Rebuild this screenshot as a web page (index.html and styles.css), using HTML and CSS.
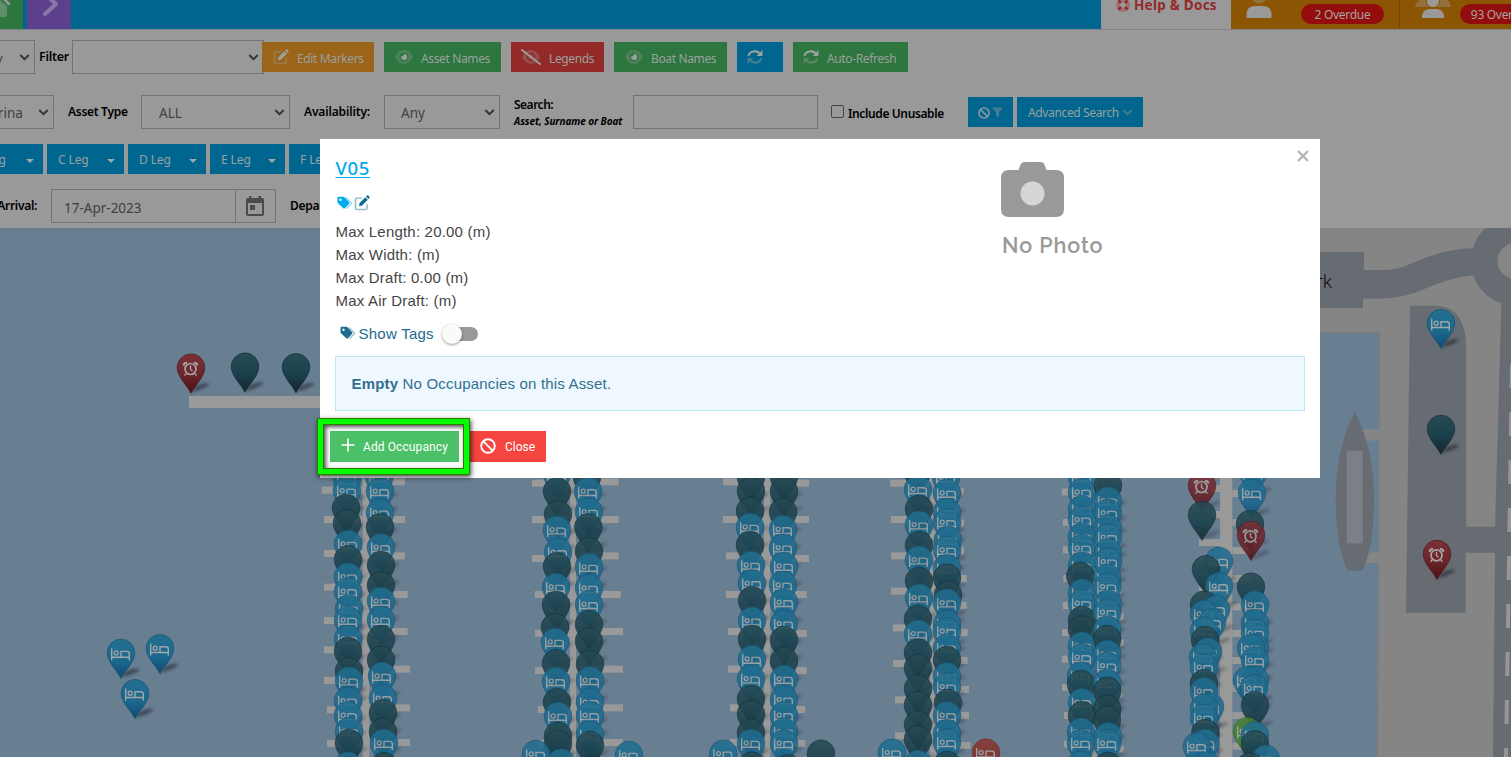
FILE: index.html
```html
<!DOCTYPE html>
<html lang="en">
<head>
<meta charset="utf-8">
<title>Marina Map</title>
<link rel="stylesheet" href="styles.css">
</head>
<body>
<svg class="defs" width="0" height="0">
  <defs>
    <symbol id="i-edit" viewBox="0 0 16 16"><path class="soft" fill="none" stroke="currentColor" stroke-width="1.7" d="M8 3H3Q1.500 3 1.500 4.500V13Q1.500 14.500 3 14.500H11.500Q13 14.500 13 13V9"/><path fill="currentColor" d="M5 11.200L5.600 8 11.300 2.300 13.800 4.800 8.100 10.500ZM12 1.600L13 .6Q13.700 0 14.500 .8L15.300 1.600Q16 2.400 15.400 3.100L14.400 4.100Z"/></symbol>
    <symbol id="i-eye" viewBox="0 0 18 14"><path class="faint" fill="currentColor" fill-rule="evenodd" d="M0 7Q3.500 0 9 0T18 7Q14.500 14 9 14T0 7ZM9 2.500A4.500 4.500 0 1 0 9 11.500 4.500 4.500 0 1 0 9 2.500Z"/><path fill="currentColor" d="M9 4A3 3 0 1 1 6.200 6.300Q8.600 7 9 4Z"/></symbol>
    <symbol id="i-eyeoff" viewBox="0 0 20 16"><path class="faint" fill="currentColor" fill-rule="evenodd" d="M1 8Q4.500 1 10 1T19 8Q15.500 15 10 15T1 8ZM10 3.800A4.200 4.200 0 1 0 10 12.200 4.200 4.200 0 1 0 10 3.800Z"/><circle class="faint" cx="10" cy="8" r="2.500" fill="currentColor"/><path stroke="currentColor" stroke-width="1.800" stroke-linecap="round" d="M1 1L19 15"/></symbol>
    <symbol id="i-sync" viewBox="0 0 16 16"><path fill="none" stroke="currentColor" stroke-width="2" d="M1.500 7A6.500 5.500 0 0 1 13 4.500"/><path fill="currentColor" d="M15.500 1V7H9.500Z"/><g class="soft"><path fill="none" stroke="currentColor" stroke-width="2" d="M14.500 9A6.500 5.500 0 0 1 3 11.500"/><path fill="currentColor" d="M.5 15V9H6.500Z"/></g></symbol>
    <symbol id="i-ban" viewBox="0 0 16 16"><g fill="none" stroke="currentColor" stroke-width="1.900"><circle cx="8" cy="8" r="6.800"/><path d="M3.200 3.200L12.800 12.800"/></g></symbol>
    <symbol id="i-tags" viewBox="0 0 16 14"><path class="soft" fill="none" stroke="currentColor" stroke-width="1.300" d="M9 1.500L14.800 7.200 9.500 12.700"/><path fill="currentColor" fill-rule="evenodd" d="M.5 2Q.5 .8 1.700 .8H6.500Q7 .8 7.500 1.300L12 6Q13 7 12 8L8 12.200Q7 13 6 12L1 7.200Q.5 6.800 .5 6ZM3.500 2.500A1.200 1.200 0 1 0 3.500 4.900 1.200 1.200 0 1 0 3.500 2.500Z"/></symbol>
    <symbol id="i-chev" viewBox="0 0 12 8"><path fill="none" stroke="currentColor" stroke-width="2.200" d="M1.200 1.200L6 6 10.800 1.200"/></symbol>
    <linearGradient id="g-bed" x1="0" y1="0" x2="0" y2="1"><stop offset="0" stop-color="#236f90"/><stop offset=".55" stop-color="#1c698e"/><stop offset="1" stop-color="#114673"/></linearGradient>
    <linearGradient id="g-free" x1="0" y1="0" x2="0" y2="1"><stop offset="0" stop-color="#284b54"/><stop offset=".55" stop-color="#19404c"/><stop offset="1" stop-color="#16252a"/></linearGradient>
    <linearGradient id="g-late" x1="0" y1="0" x2="0" y2="1"><stop offset="0" stop-color="#7d3038"/><stop offset=".55" stop-color="#6b242a"/><stop offset="1" stop-color="#4a1015"/></linearGradient>
    <linearGradient id="g-out" x1="0" y1="0" x2="0" y2="1"><stop offset="0" stop-color="#8b3934"/><stop offset="1" stop-color="#75251f"/></linearGradient>
    <linearGradient id="g-new" x1="0" y1="0" x2="0" y2="1"><stop offset="0" stop-color="#4b8035"/><stop offset="1" stop-color="#3e7826"/></linearGradient>
    <filter id="soften" x="-50%" y="-50%" width="200%" height="200%"><feGaussianBlur stdDeviation="1.700"/></filter>
    <path id="pin-shape" d="M0 39.500C-3 33-13.800 23-13.800 14A13.800 13.800 0 0 1 13.800 14C13.800 23 3 33 0 39.500Z"/>
    <path id="pin-shade" d="M0 38.500Q3 31 14 29.500 20 29 17 32 10 36.500 0 38.500Z"/>
    <g id="pin-bed" fill="none" stroke="#a3a6a8" transform="translate(-.5 .7)"><path stroke-width="1.400" d="M-8.800 8.500V20.500M-8.800 17.500H8.800M8.800 20.500V14Q8.800 11.700 6 11.700H.5V17"/><circle cx="-4.300" cy="13.200" r="2" stroke-width="1.300"/></g>
    <g id="pin-clock" fill="none" stroke="#a5a5a5" transform="translate(-.5 .3)"><circle cy="15" r="5.500" stroke-width="1.700"/><path stroke-width="1.300" d="M0 11.500V15.500L2 17M-4.200 19.500L-6 21.500M4.200 19.500L6 21.500"/><path stroke-width="2" d="M-7 11.500Q-6.500 8.500-3.500 8.700M7 11.500Q6.500 8.500 3.500 8.700"/></g>
  </defs>
</svg>

<div class="app">
  <header class="topbar">
    <div class="tile home"><svg width="23" height="29"><path fill="#5f9069" d="M-8 0H0L7 6V15Q7 17 5 17H-8Z"/><path stroke="#999" stroke-width="2.500" stroke-linecap="round" d="M3-2L9 4"/></svg></div>
    <div class="tile next"><svg width="44" height="29"><path fill="none" stroke="#8876a8" stroke-width="4" stroke-linecap="round" stroke-linejoin="round" d="M18-6L29 4 18 14"/></svg></div>
    <div class="tile help"><svg width="14" height="14" viewBox="0 0 14 14"><circle cx="7" cy="7" r="5" fill="none" stroke="#a17170" stroke-width="4"/><path stroke="#932a2a" stroke-width="2.600" d="M2.500 2.500L5 5M9 9L11.500 11.500M11.500 2.500L9 5M5 9L2.500 11.500"/></svg><b>Help &amp; Docs</b></div>
    <div class="tile count one"><svg width="26" height="29"><circle cx="13" cy="-4" r="7.500" fill="#94713c"/><path fill="#999" d="M.5 18V15Q.5 6 9 6H17Q25.500 6 25.500 15V18Z"/></svg><span class="badge">2 Overdue</span></div>
    <div class="tile count two"><svg width="38" height="29"><path fill="#94713c" d="M0 7Q1 0 8-1H30Q35 0 36 7Z"/><circle cx="18" cy="1" r="6.500" fill="#999" stroke="#8b5503"/><path fill="#999" d="M7 18V16Q8 9 15 9H21Q28 9 29 16V18Z"/></svg><span class="badge">93 Overdue</span></div>
  </header>

  <section class="row r1">
    <div class="select s-view">y<svg><use href="#i-chev"/></svg></div>
    <label class="lb l-filter">Filter</label>
    <div class="select s-filter"><svg><use href="#i-chev"/></svg></div>
    <button class="btn orange b1"><svg width="16" height="16"><use href="#i-edit"/></svg>Edit Markers</button>
    <button class="btn green b2"><svg width="18" height="14"><use href="#i-eye"/></svg>Asset Names</button>
    <button class="btn red b3"><svg width="20" height="16"><use href="#i-eyeoff"/></svg>Legends</button>
    <button class="btn green b4"><svg width="18" height="14"><use href="#i-eye"/></svg>Boat Names</button>
    <button class="btn blue b5"><svg width="16" height="16"><use href="#i-sync"/></svg></button>
    <button class="btn green b6"><svg width="16" height="16"><use href="#i-sync"/></svg>Auto-Refresh</button>
  </section>

  <section class="row r2">
    <div class="select s-marina">Marina<svg><use href="#i-chev"/></svg></div>
    <label class="lb l-type">Asset Type</label>
    <div class="select s-type">ALL<svg><use href="#i-chev"/></svg></div>
    <label class="lb l-avail">Availability:</label>
    <div class="select s-avail">Any<svg><use href="#i-chev"/></svg></div>
    <label class="lb l-search">Search:<i>Asset, Surname or Boat</i></label>
    <div class="input"></div>
    <span class="check"></span>
    <label class="lb l-unus">Include Unusable</label>
    <button class="btn blue b7"><svg width="12" height="12"><use href="#i-ban"/></svg><svg width="11" height="11" viewBox="0 0 11 11"><path class="soft" fill="currentColor" d="M0 .5H11L7 5.500V10.500L4 8.500V5.500Z"/></svg></button>
    <button class="btn blue b8">Advanced Search<svg class="soft" width="11" height="7"><use href="#i-chev"/></svg></button>
  </section>

  <section class="row r3">
    <button class="btn blue g1">B Leg<i class="caret"></i></button>
    <button class="btn blue g2">C Leg<i class="caret"></i></button>
    <button class="btn blue g3">D Leg<i class="caret"></i></button>
    <button class="btn blue g4">E Leg<i class="caret"></i></button>
    <button class="btn blue g5">F Leg<i class="caret"></i></button>
  </section>

  <section class="row r4">
    <label class="lb l-arr">Arrival:</label>
    <div class="date">17-Apr-2023</div>
    <div class="cal"><svg width="18" height="20" viewBox="0 0 18 20"><path fill="#4b4b4b" fill-rule="evenodd" d="M2 2H3V0H5.500V2H12.500V0H15V2H16Q18 2 18 4V18Q18 20 16 20H2Q0 20 0 18V4Q0 2 2 2ZM2 7V18H16V7ZM4 9H9V14H4Z"/></svg></div>
    <label class="lb l-dep">Departure:</label>
  </section>

  <svg class="map" width="1511" height="529" viewBox="0 228 1511 529">
    <rect y="228" width="1511" height="529" fill="#687e91"/>
    <path fill="#858585" d="M1200 228H1511V757H1377L1379 332H1200Z"/>
    <path fill="none" stroke="#7a7d7f" stroke-width="1.500" d="M1200 332.500H1379.500L1377.500 757"/>
    <path fill="#858585" d="M1362 429.500H1381V440.500H1362ZM1365 552.500H1380V563H1365Z"/>
    <g fill="#676c73">
      <path d="M1300 252H1364V270H1380.700Q1396 271 1415 262 1444 249 1475 248V275Q1452 277 1427 288 1402 299 1380.700 298.500H1363V308H1300Z"/>
      <circle cx="1516" cy="261" r="45"/>
      <path d="M1501.500 300H1511V757H1493L1495 552.700H1465.700V613H1406L1410 305.700H1438Q1466 308 1466.300 348V526.700H1495Z"/>
      <path d="M1354.700 411.500Q1335.700 450 1335.700 497 1336 548 1347.700 570.700H1362.300Q1374 548 1374 497 1374 450 1354.700 411.500Z"/>
    </g>
    <circle cx="1515.500" cy="261" r="18" fill="#858585"/>
    <rect x="1346.700" y="450.700" width="16" height="92.600" fill="#7b8087"/>
    <path stroke="#969696" stroke-width="4" stroke-dasharray="24 24" d="M1512 364L1506 757"/>
    <text class="place" x="1332" y="288" text-anchor="end">Car Park</text>
    <rect x="189" y="396" width="140" height="12" fill="#999"/>
    <g id="docks" fill="#999"></g>
    <g id="pins"></g>
  </svg>
</div>

<div class="modal">
  <div class="modal-top">
    <div class="info">
      <a class="title">V05</a>
      <div class="icons"><svg class="sky" width="16" height="14"><use href="#i-tags"/></svg><svg class="deep" width="16" height="16"><use href="#i-edit"/></svg></div>
      <p>Max Length: 20.00 (m)</p>
      <p>Max Width: (m)</p>
      <p>Max Draft: 0.00 (m)</p>
      <p>Max Air Draft: (m)</p>
      <div class="tags"><svg width="16" height="14"><use href="#i-tags"/></svg><span>Show Tags</span><span class="switch"></span></div>
    </div>
    <div class="photo">
      <svg width="63" height="55" viewBox="0 0 63 55"><path fill="#999" d="M8 8H17.500L19 4Q20 0 24 0H39Q43 0 44 4L45.500 8H55Q63 8 63 16V47Q63 55 55 55H8Q0 55 0 47V16Q0 8 8 8Z"/><circle cx="31.500" cy="31.500" r="12" fill="#d6d6d6"/></svg>
      <div class="nophoto">No Photo</div>
    </div>
    <svg class="close-x" width="12" height="12"><path stroke="#b5b5b5" stroke-width="2.300" d="M1 1L11 11M11 1L1 11"/></svg>
  </div>
  <div class="alert"><b>Empty</b> No Occupancies on this Asset.</div>
  <div class="actions">
    <button class="mbtn add"><svg width="14" height="14"><path stroke="#fff" stroke-width="1.700" d="M7 .5V13.500M.5 7H13.500"/></svg>Add Occupancy</button>
    <button class="mbtn close"><svg width="16" height="16"><use href="#i-ban"/></svg>Close</button>
  </div>
  <div class="marker-box"></div>
</div>
<script src="map.js"></script>
</body>
</html>
```

FILE: styles.css
```css
* { box-sizing: border-box; }
body { margin: 0; width: 1511px; height: 757px; overflow: hidden; background: #999; font-family: "Noto Sans", "Open Sans", sans-serif; font-size: 13px; color: #000; }
.defs { position: absolute; }
.soft { opacity: .42; }
.faint { opacity: .3; }
.app { display: flex; flex-direction: column; width: 1511px; height: 757px; overflow: hidden; }

.topbar { display: flex; flex: none; height: 30px; background: #006690; border-bottom: 1px solid #828486; overflow: hidden; }
.tile { flex: none; height: 29px; display: flex; overflow: hidden; }
.tile svg { flex: none; }
.home { width: 23px; background: #2d763f; margin-right: 4px; }
.next { width: 44px; background: #5c3f8d; }
.help { width: 130px; margin-left: 1030px; padding-left: 15px; background: #999; color: #932a2a; font-size: 13.500px; line-height: 18px; letter-spacing: .25px; }
.help svg { margin: -2px 4px 0 0; }
.help b { margin-top: -4px; white-space: nowrap; }
.count { background: #8b5503; }
.one { width: 169px; padding-left: 15px; border-right: 1px solid #754600; }
.two { width: 180px; padding-left: 15px; }
.badge { flex: none; height: 20px; margin-top: 4px; border-radius: 10px; background: #930d0c; color: #a8a3a0; font-size: 12px; line-height: 22px; text-align: center; letter-spacing: -.3px; white-space: nowrap; }
.one .badge { width: 83px; margin-left: 29px; }
.two .badge { width: 84px; margin-left: 7px; }

.row { display: flex; flex: none; align-items: center; white-space: nowrap; }
.row > * { flex: none; }
.r1 { height: 34px; margin: 10px 0 0 -60px; }
.r2 { height: 34px; margin: 21px 0 0 -60px; }
.r3 { height: 30px; margin: 15px 0 0 -60px; gap: 4px; }
.r4 { height: 34px; margin: 15px 0 5px -60px; }
.select { display: flex; align-items: center; justify-content: space-between; height: 34px; border: 1px solid #737373; color: #404040; font-size: 13.500px; padding: 1px 4px 0 0; }
.select svg { width: 11px; height: 7px; color: #333; margin-left: auto; }
.lb { font-weight: 600; font-size: 12px; letter-spacing: -.3px; padding-bottom: 2px; }
.s-view { width: 95px; padding-left: 55px; font-size: 13px; }
.l-filter { width: 37px; padding-left: 4px; font-size: 12.500px; }
.s-filter { width: 192px; }
.btn { display: flex; align-items: center; height: 30px; border: 0; margin: 0; padding: 1px 0 0; color: #9ba09e; font-family: inherit; font-size: 12px; letter-spacing: -.36px; text-align: left; }
.btn svg { flex: none; }
.r1 .btn { padding-top: 2px; }
.r1 .btn svg { margin-top: -3px; }
.orange { background: #9a6419; }
.green { background: #2d763f; }
.red { background: #932a28; }
.blue { background: #006690; }
.b1 { width: 112px; margin-left: -2px; padding-left: 11px; gap: 8px; position: relative; }
.b2 { width: 117px; margin-left: 10px; padding-left: 11px; gap: 8px; }
.b3 { width: 93px; margin-left: 10px; padding-left: 10px; gap: 8px; }
.b4 { width: 113px; margin-left: 10px; padding-left: 11px; gap: 8px; }
.b5 { width: 46px; margin-left: 10px; padding-left: 10px; }
.b6 { width: 115px; margin-left: 10px; padding-left: 10px; gap: 8px; }

.s-marina { width: 114px; padding-left: 37px; }
.l-type { width: 73px; margin-left: 14px; }
.s-type { width: 149px; padding-left: 17px; }
.l-avail { width: 80px; margin-left: 14px; letter-spacing: -.15px; }
.s-avail { width: 116px; padding-left: 16px; }
.l-search { width: 109px; margin: 0 10px 0 14px; line-height: 16px; padding: 1px 0 0; letter-spacing: -.5px; }
.l-search i { display: block; font-size: 10px; font-weight: 700; letter-spacing: -.1px; }
.input { width: 185px; height: 34px; border: 1px solid #737373; }
.check { width: 13px; height: 13px; margin: 0 4px 1px 13px; border: 1px solid #444; border-radius: 2px; }
.l-unus { width: 120px; padding: 3px 0 0; letter-spacing: -.38px; }
.b7 { width: 45px; padding-left: 10px; gap: 2px; }
.b8 { width: 126px; margin-left: 4px; padding-left: 11px; gap: 3px; }

.r3 .btn { justify-content: space-between; padding: 1px 9px 0 11px; letter-spacing: -.1px; }
.caret { border: 4px solid transparent; border-top-color: #9ba9ae; border-bottom: 0; margin-top: 2px; }
.r3 .g1 { width: 103px; padding-left: 35px; }
.g2 { width: 77px; }
.g3 { width: 78px; }
.g4 { width: 75px; }
.g5 { width: 77px; }

.l-arr { width: 97px; text-align: right; }
.date { width: 185px; height: 34px; margin-left: 14px; border: 1px solid #737373; padding: 2px 0 0 12px; line-height: 32px; font-size: 13.500px; color: #404040; }
.cal { display: flex; align-items: center; justify-content: center; width: 41px; height: 34px; margin-left: -1px; padding-right: 2px; border: 1px solid #737373; }
.l-dep { margin-left: 14px; }
.map { flex: none; display: block; }
.place { font-size: 19px; font-weight: 300; font-family: "Open Sans", "Noto Sans", sans-serif; }

.modal { position: absolute; left: 320px; top: 139px; width: 1000px; height: 339px; padding: 0 15px; background: #fff; font-family: "Liberation Sans", Arial, sans-serif; font-size: 15px; color: #444; }
.modal-top { display: flex; width: 985px; height: 217px; }
.info { flex: none; width: 666px; padding: 16px 0 0 .500px; }
.title { display: block; width: max-content; height: 27px; font-family: "Noto Sans", sans-serif; font-weight: 500; font-size: 18.500px; line-height: 26px; letter-spacing: .6px; color: #00a8ec; text-decoration: underline; text-underline-offset: 2px; }
.icons { display: flex; align-items: center; gap: 1px; height: 38px; padding: 4px 0 0 1px; }
.sky { color: #00a8ec; }
.deep { color: #0f6b91; }
.info p { margin: 0; height: 23px; line-height: 23px; letter-spacing: .2px; white-space: nowrap; }
.tags { display: flex; align-items: center; height: 22px; margin-top: 10px; padding-left: 4px; gap: 3px; color: #1d6b90; letter-spacing: .25px; }
.switch { position: relative; width: 33px; height: 14px; margin: 1px 0 0 8px; border-radius: 7px; background: #999; }
.switch::before { content: ""; position: absolute; left: -3px; top: -3px; width: 20px; height: 20px; border-radius: 50%; background: #fafafa; box-shadow: 0 1px 3px rgba(0,0,0,.4); }
.photo { flex: none; width: 296px; padding-top: 23px; }
.photo svg { display: block; }
.nophoto { margin-top: 15px; padding-left: 1px; font-family: Raleway, Montserrat, Lato, sans-serif; font-weight: 600; font-size: 21.500px; line-height: 27px; letter-spacing: .9px; color: #999; }
.close-x { flex: none; margin: 11px 0 0; }
.alert { height: 55px; border: 1px solid #b8e8f1; background: #eff7ff; padding-left: 15.500px; line-height: 54px; color: #31708f; letter-spacing: .18px; }
.actions { display: flex; gap: 11px; padding: 20px 0 0; margin-left: -5px; }
.mbtn { display: flex; align-items: center; height: 31px; border: 0; padding: 0; color: #fff; font-family: Roboto, sans-serif; font-size: 12px; }
.add { width: 129px; padding-left: 11px; gap: 8px; background: #4bc067; letter-spacing: .1px; }
.add svg { margin-top: -3px; }
.close { width: 76px; padding-left: 10px; gap: 9px; background: #f44541; }
.close svg { margin-top: -2px; }
.marker-box { position: absolute; left: -3px; top: 279px; width: 153px; height: 57px; border: 6px solid #0f0; outline: 1px solid #2b7a00; outline-offset: -1px; box-shadow: 1px 2px 5px rgba(0,0,0,.75), inset 0 0 0 1px #2b7a00, inset 2px 2px 4px 1px rgba(0,0,0,.7); }
```

FILE: map.js
```js
// Pier columns: x position and top of every pin, in third-pixels from the origin.
// b = occupied, d = free, r = overdue, o = leaving, n = new
const groups = [
  [300, 470, `141,-12b 141,20b 138,72d 141,118d 144,180b 144,226d 144,278b 144,322b 147,374b 144,408b 144,465b 144,501d 147,562d 147,590b 144,650b 144,694b 147,742b 147,777d 144,845b
   238,-20b 240,22b 240,86b 240,130d 243,190b 243,243d 243,304d 243,351b 243,408b 243,466d 243,528d 246,576b 249,643b 249,687d 249,743d 252,777b 252,847d
   771,-30b 771,22d 774,91d 771,137b 774,205b 771,247d 768,309b 768,363d 765,430d 765,474b 768,538d 768,592b 771,655d 774,696b 774,756d 774,780d 708,810b 783,836b
   861,-20d 864,22b 867,84b 865,130d 867,202d 867,249b 867,312b 867,361b 867,421d 867,472d 870,541d 870,589b 870,655b 870,694b 870,752b 870,783d 987,813b`],
  [680, 470, `213,-20d 213,22d 210,81d 210,129b 210,183d 213,243b 216,298b 216,349d 216,410b 216,465d 216,525b 213,584b 213,645d 213,690d 213,746d 213,777b 130,809b 216,845d
   312,-22d 312,22d 309,84d 309,136b 309,191b 312,246b 309,303b 312,355b 312,419b 312,468d 312,531d 312,585b 312,647b 312,694b 312,743b 312,778b 423,809d 324,853d
   712,-40d 714,16b 717,75d 717,122b 717,184d 717,227b 717,291d 717,341b 714,405d 714,449b 714,506d 714,552d 714,614d 714,663d 714,722d 714,766d 636,806b 714,840b
   798,-20b 801,27b 801,85b 801,115b 804,168b 801,198b 801,253b 801,281d 804,332d 801,356b 801,420b 801,442b 801,491b 801,528d 801,577b 801,608b 804,657d 801,694b 801,748b 801,775b 801,843d 918,806o`],
  [1020, 470, `186,-20b 186,24b 186,76b 186,107b 186,158b 186,192b 186,245b 181,276d 186,326b 186,358b 186,408d 186,436d 186,485b 186,520b 183,575b 183,600d 186,655b 186,694d 183,743b 183,777b 183,843b
   264,5d 264,50b 264,87b 264,133b 264,160b 264,205b 264,233b 262,282b 262,308b 264,360b 262,385b 262,437b 262,465d 262,510b 262,545b 262,597b 262,620d 262,675d 262,707d 264,757b 262,778b 264,846d
   546,5r 546,93d 597,231b 558,256d 597,307b 552,362d 588,376b 552,390b 576,415b 552,440b 555,468d 564,503b 549,520b 552,550b 552,598d 552,622b 570,668b 552,672b 552,702b 556,747d 556,777b 531,787b 561,845b
   700,-35b 696,27b 690,120d 693,153r 693,308d 705,362b 705,418b 705,447b 705,490b 693,492b 705,529b 705,588b 681,589b 702,613b 705,664d 681,742n 705,754b 705,781d 738,825b 690,847d`],
  [1150, 220, `873,268b 873,585d 861,960r`],
  [90, 340, `303,41r 465,38d 618,40d`],
  [90, 620, `93,57b 210,43b 135,178b`]
];
const fill = { b: "g-bed", d: "g-free", r: "g-late", o: "g-out", n: "g-new" };
const edge = { b: "#1a5674", d: "#15333b", r: "#531a1f", o: "#702820", n: "#39691f" };
let pins = "";
for (const [ox, oy, list] of groups) {
  const crowded = oy === 470;
  for (const item of list.trim().split(/\s+/)) {
    const k = item.slice(-1);
    const [x, y] = item.slice(0, -1).split(",").map(Number);
    const glyph = k === "d" ? "" : `<use href="#pin-${k === "r" ? "clock" : "bed"}"/>`;
    pins += `<g transform="translate(${(ox + x / 3).toFixed(1)} ${(oy + y / 3).toFixed(1)})">
      <use href="#pin-shade" fill="#202830" opacity="${crowded ? 0.33 : 0.6}" filter="url(#soften)"/>
      <g opacity="${crowded ? 0.88 : 1}"><use href="#pin-shape" fill="url(#${fill[k]})" stroke="${edge[k]}" stroke-width=".8"/>${glyph}</g></g>`;
  }
}
document.getElementById("pins").innerHTML = pins;

// Piers: spine left/right, then finger ends with their tops on each side.
const piers = [
  [300, 188, 208, [[65,50],[72,138],[72,240],[72,341],[72,441],[72,529],[72,621],[81,709],[81,810]], [[315,25],[315,138],[315,247],[323,363],[323,474],[330,587],[330,703],[330,807]]],
  [300, 810, 828, [[696,29],[696,138],[696,255],[705,363],[705,480],[705,591],[714,708],[714,810]], [[956,25],[956,138],[956,247],[962,363],[969,474],[969,587],[969,703],[969,807]]],
  [680, 252, 271, [[129,25],[129,138],[138,247],[138,363],[144,474],[144,587],[150,703],[150,807]], [[387,29],[387,138],[387,255],[380,363],[380,480],[380,591],[376,708],[376,810]]],
  [680, 750, 770, [[630,29],[633,138],[633,247],[633,353],[639,463],[639,570],[645,679],[645,787]], [[852,55],[852,149],[852,232],[860,315],[860,396],[863,477],[863,561],[867,648],[867,726],[872,816]]],
  [1020, 218, 232, [[125,55],[129,147],[129,229],[130,315],[128,396],[126,477],[126,557],[126,642],[132,726],[132,812]], [[303,208],[303,350],[311,430],[311,507],[303,580],[306,660],[306,740],[311,827]]],
  [1020, 600, 637, [[575,45],[575,123],[537,207],[537,350]], [[660,60],[660,147],[690,231],[690,315],[680,400],[680,480],[680,561],[680,645],[680,726],[680,818]]]
];
let docks = "";
const bar = (ox, a, b, y, h) => {
  docks += `<rect x="${ox + a / 3}" y="${470 + y / 3}" width="${(b - a) / 3}" height="${h}"/>`;
};
for (const [ox, l, r, left, right] of piers) {
  bar(ox, l, r, 0, 290);
  left.forEach(([x, y]) => bar(ox, x, l, y, 7));
  right.forEach(([x, y]) => bar(ox, r, x, y, 7));
}
document.getElementById("docks").innerHTML = docks;
```
